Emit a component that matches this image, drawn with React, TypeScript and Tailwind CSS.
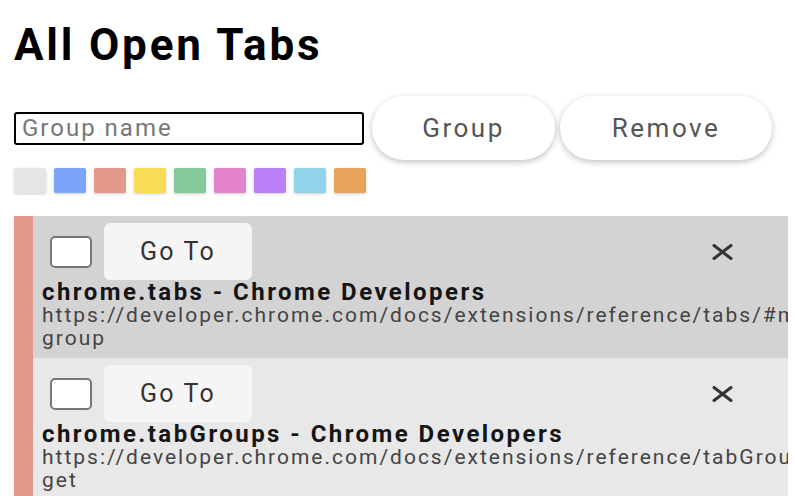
const swatches = [
  'bg-[#e6e6e6]',
  'bg-[#7ba4fa]',
  'bg-[#e39a8c]',
  'bg-[#f9db55]',
  'bg-[#83c99a]',
  'bg-[#e283cb]',
  'bg-[#bb80f9]',
  'bg-[#8fd4e8]',
  'bg-[#e6a55a]',
]

const tabs = [
  {
    title: 'chrome.tabs - Chrome Developers',
    url: 'https://developer.chrome.com/docs/extensions/reference/tabs/#method-',
    rest: 'group',
    bg: 'bg-[#d3d3d3]',
  },
  {
    title: 'chrome.tabGroups - Chrome Developers',
    url: 'https://developer.chrome.com/docs/extensions/reference/tabGroups/#method-',
    rest: 'get',
    bg: 'bg-[#e8e8e8]',
  },
]

function CloseIcon() {
  return (
    <svg width="21" height="16" viewBox="0 0 21 16" className="text-[#333]">
      <path d="M2 1.5 L19 14.5 M19 1.5 L2 14.5" stroke="currentColor" strokeWidth="3" strokeLinecap="round" />
    </svg>
  )
}

export default function App() {
  return (
    <div className="h-[496px] overflow-hidden bg-white pl-[14px] font-['Roboto',sans-serif] text-black">
      {/* Header */}
      <h1 className="pt-[20px] text-[44px] leading-[50px] font-bold tracking-[2.8px]">All Open Tabs</h1>

      {/* Group controls */}
      <div className="mt-[26px] flex items-center">
        <input
          placeholder="Group name"
          className="h-[33px] w-[350px] rounded-[3px] border-2 border-black px-[6px] text-[24px] tracking-[2px] outline-none placeholder:text-[#777]"
        />
        <button className="ml-[8px] h-[64px] w-[183px] rounded-full bg-white text-[26px] tracking-[2.5px] text-[#555] shadow-[0_2px_6px_rgba(0,0,0,0.25)]">
          Group
        </button>
        <button className="ml-[5px] h-[64px] w-[212px] rounded-full bg-white text-[26px] tracking-[2.5px] text-[#555] shadow-[0_2px_6px_rgba(0,0,0,0.25)]">
          Remove
        </button>
      </div>

      <div className="mt-[8px] flex gap-[8px]">
        {swatches.map((c) => (
          <div key={c} className={`h-[25px] w-[32px] rounded-[2px] ${c} shadow-[0_1px_3px_rgba(0,0,0,0.2)]`} />
        ))}
      </div>

      {/* Tab list */}
      <div className="mt-[23px] w-[774px] border-l-[19px] border-[#e39a8c]">
        {tabs.map((t) => (
          <div key={t.title} className={`${t.bg} overflow-hidden pt-[7px] pb-[8px] pl-[9px]`}>
            <div className="flex items-center">
              <div className="ml-[8px] h-[32px] w-[42px] rounded-[5px] border-2 border-[#777] bg-white" />
              <button className="ml-[12px] h-[57px] w-[148px] rounded-[6px] bg-[#f5f5f5] text-[25px] tracking-[2.2px] text-[#333]">
                Go To
              </button>
              <div className="ml-[460px]">
                <CloseIcon />
              </div>
            </div>
            <div className="text-[24px] leading-[24px] font-bold tracking-[2.45px] text-[#151515]">{t.title}</div>
            <div className="text-[21px] leading-[23px] tracking-[2px] text-[#444]">
              <div className="whitespace-nowrap">{t.url}</div>
              <div>{t.rest}</div>
            </div>
          </div>
        ))}
      </div>
    </div>
  )
}
